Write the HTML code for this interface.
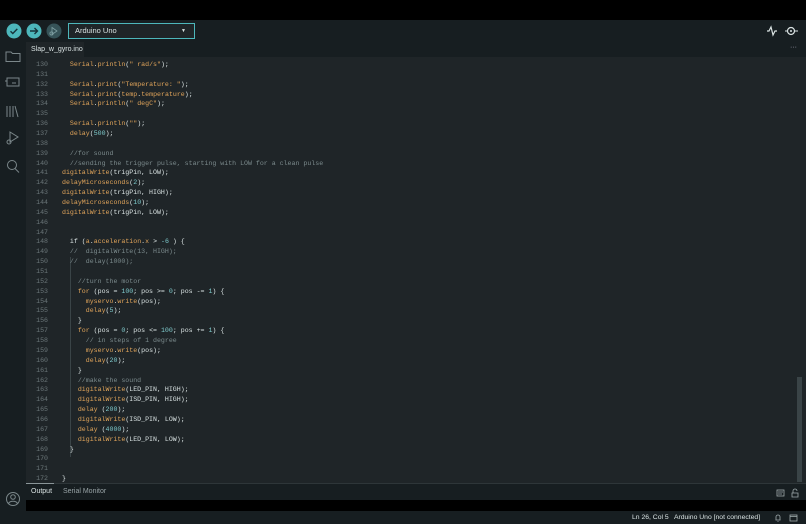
<!DOCTYPE html>
<html><head><meta charset="utf-8"><style>
*{margin:0;padding:0;box-sizing:border-box}
body{width:806px;height:524px;background:#1f2528;overflow:hidden;position:relative;font-family:"Liberation Sans",sans-serif}
.abs{position:absolute}
#code{position:absolute;left:62px;top:60px;font-family:"Liberation Mono",monospace;font-size:6.6px;line-height:9.86px;color:#dae3e3;white-space:pre}
#nums{position:absolute;left:26px;width:22px;top:60px;font-family:"Liberation Mono",monospace;font-size:6.6px;line-height:9.86px;color:#6b7679;text-align:right;white-space:pre}
.f{color:#e0a45a}.n{color:#7fcbcd}.c{color:#7b8a8c}.s{color:#e0a45a}
</style></head><body>
<div class="abs" style="left:0;top:0;width:806px;height:20px;background:#000"></div>
<div class="abs" style="left:0;top:20px;width:806px;height:22px;background:#171e21"></div>
<div class="abs" style="left:0;top:42px;width:26px;height:470px;background:#171e21"></div>
<div class="abs" style="left:26px;top:42px;width:780px;height:15px;background:#171e21"></div>
<div class="abs" style="left:26px;top:42px;width:58px;height:15px;background:#1f2528;color:#dae3e3;font-size:7px;line-height:15px;padding-left:5px">Slap_w_gyro.ino</div>
<svg class="abs" style="left:6px;top:23px" width="56" height="16">
<circle cx="8" cy="8" r="7.5" fill="#4db7bb"/><path d="M4.5 8.2l2.3 2.3 4.5-4.6" stroke="#17333a" stroke-width="1.4" fill="none"/>
<circle cx="28" cy="8" r="7.5" fill="#4db7bb"/><path d="M24 8h7.5M28.5 5l3 3-3 3" stroke="#17333a" stroke-width="1.4" fill="none"/>
<circle cx="48" cy="8" r="7.5" fill="#365358"/><path d="M46 4.5l5 3.5-5 3.5z" stroke="#7fa0a3" stroke-width=".8" fill="none"/><circle cx="45.5" cy="10.5" r="1.6" stroke="#7fa0a3" stroke-width=".8" fill="none"/>
</svg>
<div class="abs" style="left:68px;top:23px;width:127px;height:16px;border:1px solid #4db7bb;background:#1f2528;color:#dae3e3;font-size:7.5px;line-height:14px;padding-left:6px">Arduino Uno<span style="position:absolute;right:8px;top:0;font-size:5px">▼</span></div>
<svg class="abs" style="left:764px;top:24px" width="36" height="14">
<path d="M3 7h2l2-4 2 8 2-4h2" stroke="#dae3e3" stroke-width="1.2" fill="none"/>
<circle cx="27" cy="7" r="3.5" stroke="#dae3e3" stroke-width="1.2" fill="none"/><circle cx="27" cy="7" r="1" fill="#dae3e3"/><path d="M21 7h2M31 7h3" stroke="#dae3e3" stroke-width="1"/>
</svg>
<div class="abs" style="left:790px;top:44px;color:#aab;font-size:7px">···</div>
<svg class="abs" style="left:4px;top:46px" width="18" height="130" fill="none" stroke="#7b878a" stroke-width="1">
<path d="M2 6h5l1.5 1.5H16v8H2z"/>
<rect x="3" y="32" width="12" height="8"/><path d="M3 35H1M8 37h4"/>
<path d="M3 60v11M6 60v11M9 60v11M11 60l3 11"/>
<path d="M6 86l8 5-8 5z"/><circle cx="5" cy="96" r="2"/>
<circle cx="8" cy="119" r="4.5"/><path d="M11 122.5l4 4"/>
</svg>
<svg class="abs" style="left:5px;top:491px" width="16" height="16" fill="none" stroke="#7b878a" stroke-width="1"><circle cx="8" cy="8" r="6.5"/><circle cx="8" cy="6" r="2.3"/><path d="M3.5 12.5c1.5-3 7.5-3 9 0"/></svg>
<div id="nums">130
131
132
133
134
135
136
137
138
139
140
141
142
143
144
145
146
147
148
149
150
151
152
153
154
155
156
157
158
159
160
161
162
163
164
165
166
167
168
169
170
171
172</div>
<div class="abs" style="left:70px;top:257px;width:1px;height:200px;background:#3a4447"></div>
<div id="code">  <span class="f">Serial</span>.<span class="f">println</span>(<span class="s">" rad/s"</span>);

  <span class="f">Serial</span>.<span class="f">print</span>(<span class="s">"Temperature: "</span>);
  <span class="f">Serial</span>.<span class="f">print</span>(<span class="f">temp</span>.<span class="f">temperature</span>);
  <span class="f">Serial</span>.<span class="f">println</span>(<span class="s">" degC"</span>);

  <span class="f">Serial</span>.<span class="f">println</span>(<span class="s">""</span>);
  <span class="f">delay</span>(<span class="n">500</span>);

  <span class="c">//for sound</span>
  <span class="c">//sending the trigger pulse, starting with LOW for a clean pulse</span>
<span class="f">digitalWrite</span>(trigPin, LOW);
<span class="f">delayMicroseconds</span>(<span class="n">2</span>);
<span class="f">digitalWrite</span>(trigPin, HIGH);
<span class="f">delayMicroseconds</span>(<span class="n">10</span>);
<span class="f">digitalWrite</span>(trigPin, LOW);


  if (<span class="f">a</span>.<span class="f">acceleration</span>.<span class="f">x</span> &gt; <span class="n">-6</span> ) {
  <span class="c">//  digitalWrite(13, HIGH);</span>
  <span class="c">//  delay(1000);</span>

    <span class="c">//turn the motor</span>
    <span class="f">for</span> (pos = <span class="n">100</span>; pos &gt;= <span class="n">0</span>; pos -= <span class="n">1</span>) {
      <span class="f">myservo</span>.<span class="f">write</span>(pos);
      <span class="f">delay</span>(<span class="n">5</span>);
    }
    <span class="f">for</span> (pos = <span class="n">0</span>; pos &lt;= <span class="n">100</span>; pos += <span class="n">1</span>) {
      <span class="c">// in steps of 1 degree</span>
      <span class="f">myservo</span>.<span class="f">write</span>(pos);
      <span class="f">delay</span>(<span class="n">20</span>);
    }
    <span class="c">//make the sound</span>
    <span class="f">digitalWrite</span>(LED_PIN, HIGH);
    <span class="f">digitalWrite</span>(ISD_PIN, HIGH);
    <span class="f">delay</span> (<span class="n">200</span>);
    <span class="f">digitalWrite</span>(ISD_PIN, LOW);
    <span class="f">delay</span> (<span class="n">4000</span>);
    <span class="f">digitalWrite</span>(LED_PIN, LOW);
  }


}</div>
<div class="abs" style="left:797px;top:377px;width:5px;height:105px;background:#3a4447"></div>
<div class="abs" style="left:26px;top:483px;width:780px;height:1px;background:#2e3639"></div>
<div class="abs" style="left:26px;top:484px;width:780px;height:16px;background:#171e21"></div>
<div class="abs" style="left:26px;top:483px;width:28px;height:1px;background:#8a9598"></div>
<div class="abs" style="left:31px;top:488px;font-size:7px;color:#dae3e3">Output</div>
<div class="abs" style="left:63px;top:488px;font-size:7px;color:#98a3a6">Serial Monitor</div>
<svg class="abs" style="left:776px;top:488px" width="26" height="10" fill="none" stroke="#a0abad" stroke-width=".8"><rect x="1" y="2" width="7" height="6"/><path d="M2 4h5M2 6h4"/><path d="M16 5h6v4h-6zM17 5V3a2 2 0 0 1 4 0"/></svg>
<div class="abs" style="left:26px;top:500px;width:780px;height:11px;background:#000"></div>
<div class="abs" style="left:0;top:511px;width:806px;height:13px;background:#171e21"></div>
<div class="abs" style="left:632px;top:514px;font-size:6.8px;color:#dae3e3;white-space:pre">Ln 26, Col 5   Arduino Uno [not connected]</div>
<svg class="abs" style="left:773px;top:513px" width="30" height="10" fill="none" stroke="#a0abad" stroke-width=".8"><path d="M3 7V4a2 2 0 0 1 4 0v3H2.5h5M4.5 8.5h1"/><rect x="17" y="2" width="7" height="6"/><path d="M17 3.5h7"/></svg>
</body></html>
